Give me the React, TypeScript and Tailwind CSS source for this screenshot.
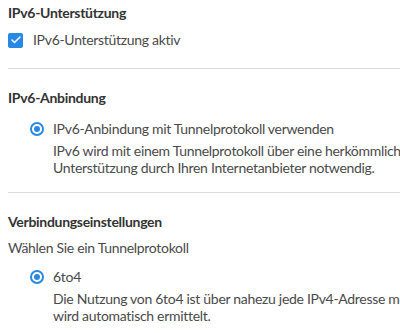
import { Check } from "lucide-react"

function Radio() {
	return (
		<span className="flex h-[14px] w-[14px] shrink-0 items-center justify-center rounded-full border-2 border-[#2889e4]">
			<span className="h-[6px] w-[6px] rounded-full bg-[#2889e4]" />
		</span>
	)
}

export default function App() {
	return (
		<div
			className="h-[333px] w-[400px] overflow-hidden bg-white text-[14px] tracking-[-0.3px] text-[#4a4a4a]"
			style={{ fontFamily: "Lato, 'Noto Sans', sans-serif" }}>
			<div className="w-[700px] pl-2">
				<section className="pt-[4px]">
					<h2 className="text-[14px] leading-[18px] font-bold text-[#333]">
						IPv6-Unterstützung
					</h2>
					<label className="mt-[9px] flex items-center gap-[10px] leading-[18px]">
						<span className="flex h-[15px] w-[15px] items-center justify-center rounded-[2px] bg-[#2889e4]">
							<Check className="h-[12px] w-[12px] text-white" strokeWidth={3} />
						</span>
						IPv6-Unterstützung aktiv
					</label>
				</section>

				<hr className="mt-[19px] border-t border-[#dcdcdc]" />

				<section className="pt-[20px]">
					<h2 className="text-[14px] leading-[18px] font-bold text-[#333]">
						IPv6-Anbindung
					</h2>
					<div className="mt-[13px] flex items-center gap-[9px] pl-[22px] leading-[18px]">
						<Radio />
						IPv6-Anbindung mit Tunnelprotokoll verwenden
					</div>
					<div className="mt-[4px] pl-[45px] leading-[17px] whitespace-nowrap">
						<p>
							IPv6 wird mit einem Tunnelprotokoll über eine herkömmliche IPv4-Verbindung hergestellt. Hierfür ist keine
						</p>
						<p>Unterstützung durch Ihren Internetanbieter notwendig.</p>
					</div>
				</section>

				<hr className="mt-[16px] border-t border-[#dcdcdc]" />

				<section className="pt-[20px]">
					<h2 className="text-[14px] leading-[18px] font-bold text-[#333]">
						Verbindungseinstellungen
					</h2>
					<p className="mt-[8px] leading-[18px]">Wählen Sie ein Tunnelprotokoll</p>
					<div className="mt-[11px] flex items-center gap-[9px] pl-[22px] leading-[18px]">
						<Radio />
						6to4
					</div>
					<div className="mt-[4px] pl-[45px] leading-[17px] whitespace-nowrap">
						<p>
							Die Nutzung von 6to4 ist über nahezu jede IPv4-Adresse möglich. Das zuständige Relay
						</p>
						<p>wird automatisch ermittelt.</p>
					</div>
				</section>
			</div>
		</div>
	)
}
